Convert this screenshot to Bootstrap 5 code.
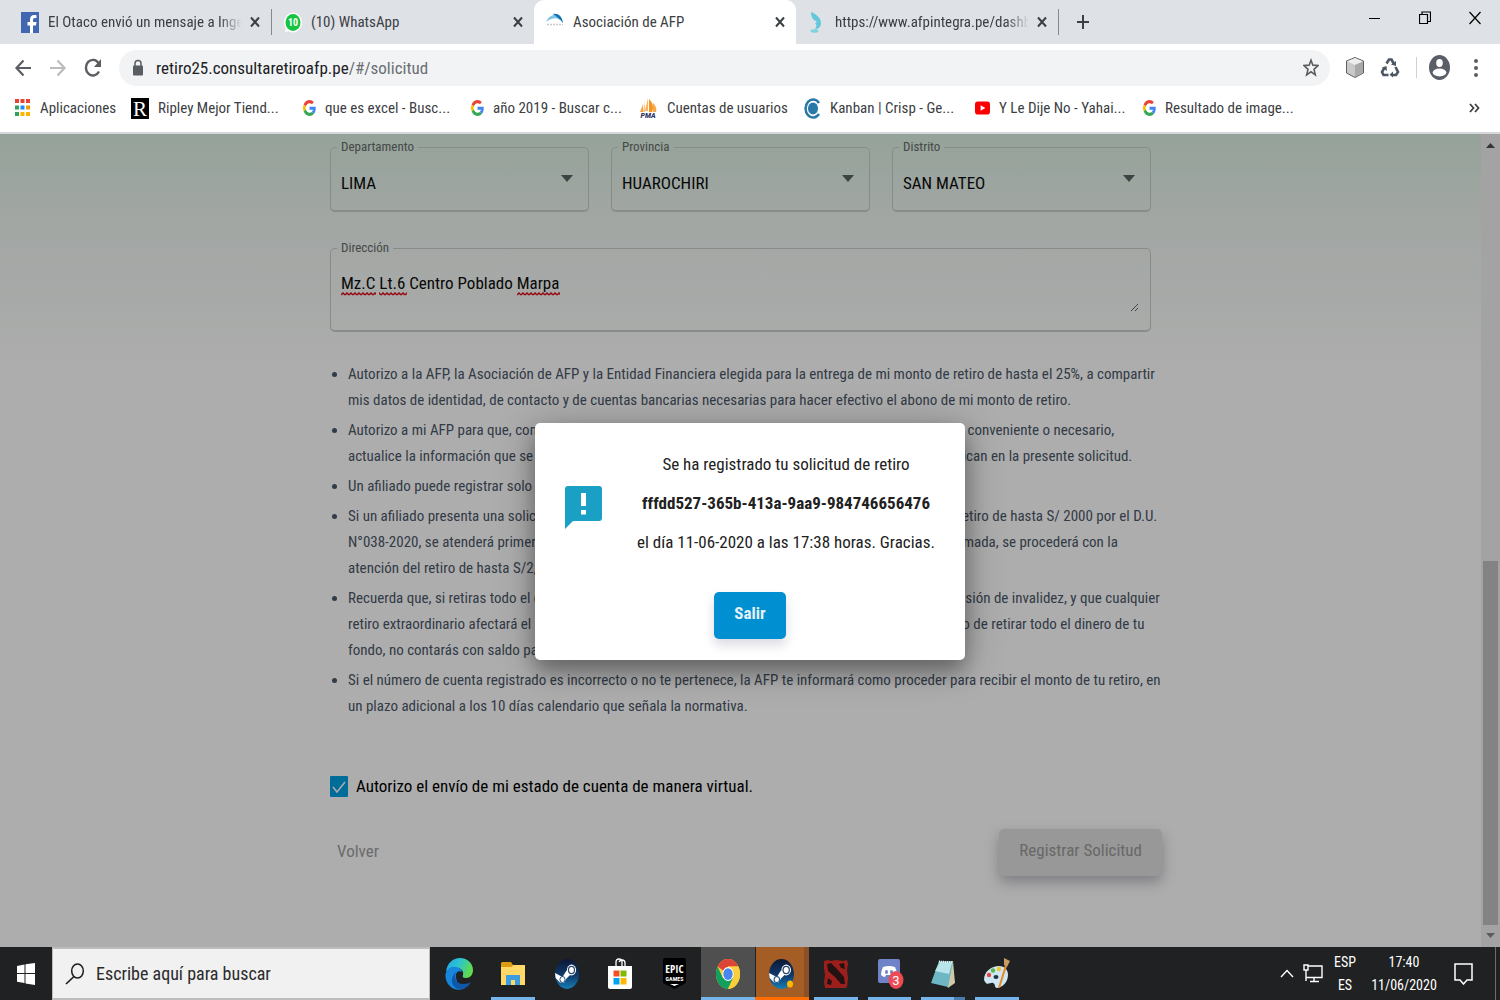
<!DOCTYPE html>
<html lang="es">
<head>
<meta charset="utf-8">
<meta name="viewport" content="width=device-width, initial-scale=1">
<title>Asociación de AFP</title>
<link href="https://cdn.jsdelivr.net/npm/bootstrap@5.3.0/dist/css/bootstrap.min.css" rel="stylesheet">
<script src="https://cdn.jsdelivr.net/npm/bootstrap@5.3.0/dist/js/bootstrap.bundle.min.js"></script>
<style>
:root{--page-font:"Roboto Condensed",Roboto,sans-serif}
body{font-family:var(--page-font);font-size:17px;overflow:hidden}
button{font-family:inherit}
svg{display:block;flex:none}
.plain{background:none;border:0;padding:0;color:inherit}
/* browser window */
.browser{font-size:15px;color:#3c4043;line-height:20px}
.tabstrip{background:#dee1e6;height:44px;padding-left:9px}
.tab{width:262px;padding:0 10px 0 12px;position:relative}
.tab .ttl{flex:1;overflow:hidden;white-space:nowrap;margin-left:9px;margin-right:7px}
.tab .fade-end{-webkit-mask-image:linear-gradient(90deg,#000 88%,transparent)}
.tab.on{background:#fff;border-radius:10px 10px 0 0}
.split{width:1px;height:26px;background:#85898e}
.wins{width:150px;color:#000}
.toolbar{height:47px;padding:0 14px}
.nav-ico{width:35px}
.omni{background:#f1f3f4;border-radius:18px;height:36px;padding:0 11px 0 13px}
.addr{font-size:17px;margin-left:12px;color:#6a6e73}
.addr .host{color:#202124}
.rule-v{width:1px;height:21px;background:#cfd1d4}
.dots{margin-left:24px}
.marks{height:43px;padding:0 20px 7px 15px;border-bottom:2px solid #d5d8da}
.marks a{color:#3c4043;text-decoration:none;white-space:nowrap;width:168px;flex:none}
.marks a.apps{width:116px}
.marks a svg{margin-right:9px}
/* page */
.pane{background:#fff}
.sheet{background:linear-gradient(180deg,#dcf0e3 0,#eef5f0 80px,#fff 240px);padding-top:5px}
.col-form{max-width:821px}
.box{border:1px solid #c9cfcb;border-bottom-width:2px;border-radius:5px;padding:0 11px 0 6px;margin:0;min-width:0}
.box legend{float:none;width:auto;font-size:13px;line-height:16px;margin:0;padding:0 4px;color:#666c69}
.box select,.box textarea{border:0;background:none;padding:0 0 0 4px;outline:0;color:#0c0c0c;appearance:none;width:100%}
.box select{height:56px;margin-top:-1px;padding-top:3px}
.box textarea{height:56px;padding-top:15px;resize:vertical;display:block;line-height:24px;margin-bottom:18px}
.gap-fields{gap:22px}
.addr-box{margin-top:28px}
.spell{position:absolute;left:4px;top:36px}
.terms{font-size:15px;line-height:26px;color:#4b5768;padding-left:18px;margin:29px -12px 0 0;white-space:nowrap}
.terms li{margin-bottom:4px}
.consent{margin-top:55px}
.form-check-input[type=checkbox].tick{width:18px;height:21px;margin:0;border-radius:1px;border:0}
.form-check-input[type=checkbox].tick:checked{background-color:#009fe3;background-size:100% 100%;background-image:url("data:image/svg+xml,%3Csvg xmlns='http://www.w3.org/2000/svg' viewBox='0 0 18 21'%3E%3Cpath d='M3 11l4 5 8-10' fill='none' stroke='%23fff' stroke-width='1.500'/%3E%3C/svg%3E")}
.actions{margin:29px -11px 0 0}
.act{height:47px;padding:0 20px 3px;border-radius:5px;border:0}
.act-off{background:#e0e0e0;color:#9a9a9a;box-shadow:0 6px 14px rgba(60,60,80,.35)}
.back{color:#a0a0a0;text-decoration:none;padding-left:7px;line-height:44px}
.back:hover{color:#888}
.sbar{width:19px;background:#f1f1f1}
.thumb{background:#c1c1c1;width:15px;height:364px;margin-bottom:7px}
.shade{position:absolute;inset:0;background:rgba(0,0,0,.32)}
.dlg{width:430px;background:#fff;border-radius:5px;padding:22px 30px 21px;box-shadow:0 12px 20px rgba(0,0,0,.3),0 4px 40px rgba(0,0,0,.25);color:#212121;margin-top:2px}
.dlg p{line-height:39px;margin:0;white-space:nowrap}
.dlg p.code{font-weight:700}
.act-go{background:#008fd0;color:#e4f1f8;font-weight:700;box-shadow:0 6px 12px rgba(0,0,60,.15);margin-top:30px}
/* desktop bar */
.desk{background:#1f2122;height:53px;color:#fff}
.start{width:52px}
.seek{width:378px;background:#f1f1f1;border:2px solid #bdbdbd;border-width:2px 1px;padding-left:12px}
.seek input{border:0;background:none;outline:0;font-size:18px;padding:0;margin-left:11px;color:#2b2b2b}
.seek input::placeholder{color:#2b2b2b;opacity:1}
.apps-run{width:592px;margin-left:2px}
.app{flex:1 1 0;position:relative}
.app.open::after{content:"";position:absolute;left:5px;right:5px;bottom:0;height:3px;background:#76b4ec}
.app.front{background:#4f4f4f}
.app.front::after,.app.alert-on::after{left:0;right:0}
.app.alert-on{background:#a55d26;box-shadow:inset -5px 0 #8a5128,inset 1px 0 #1f2122}
.app.alert-on::after{background:#ff6c00}
.app.multi::after{background:linear-gradient(90deg,#76b4ec 76%,#4a7dab 76%)}
.tray{font-size:14px;line-height:23px;text-align:center}
.lang{width:44px}
.clock{width:74px}
.net{margin-left:9px}
.notes{margin:0 22px 0 13px}
.peek{width:1px;background:#6e6e6e}
</style>
</head>
<body>
<svg width="0" height="0" class="position-absolute" aria-hidden="true">
<defs>
<linearGradient id="stg" x1="0" y1="0" x2="0" y2="1"><stop offset="0" stop-color="#0d1836"/><stop offset=".55" stop-color="#0f3a6c"/><stop offset="1" stop-color="#1480b8"/></linearGradient>
<linearGradient id="edA" x1="0" y1="0" x2="1" y2=".4"><stop offset="0" stop-color="#1fa4e6"/><stop offset=".5" stop-color="#2bc3d2"/><stop offset="1" stop-color="#5fdc4e"/></linearGradient>
<symbol id="x" viewBox="0 0 12 14"><path d="M2 2.500l8 9M10 2.500l-8 9" stroke="#3c4043" stroke-width="2" fill="none"/></symbol>
<symbol id="g" viewBox="0 0 48 48" preserveAspectRatio="none"><path fill="#ea4335" d="M24 9.500c3.500 0 6.700 1.200 9.200 3.600l6.900-6.900C35.900 2.400 30.500 0 24 0 14.600 0 6.500 5.400 2.600 13.200l8 6.200C12.400 13.700 17.700 9.500 24 9.500z"/><path fill="#4285f4" d="M47 24.600c0-1.600-.2-3.100-.4-4.600H24v9h12.900c-.6 3-2.300 5.500-4.800 7.200l7.700 6C44.400 38 47 31.800 47 24.600z"/><path fill="#fbbc05" d="M10.500 28.600c-.5-1.500-.8-3-.8-4.600s.3-3.100.8-4.600l-8-6.200C.9 16.500 0 20.100 0 24s.9 7.500 2.600 10.800z"/><path fill="#34a853" d="M24 48c6.500 0 11.900-2.100 15.900-5.800l-7.700-6c-2.200 1.500-4.900 2.300-8.200 2.300-6.300 0-11.600-4.200-13.500-9.900l-8 6.200C6.500 42.600 14.600 48 24 48z"/></symbol>
<symbol id="steam" viewBox="0 0 24 30" preserveAspectRatio="none"><ellipse cx="12" cy="15" rx="12" ry="15" fill="url(#stg)"/><path d="M0 14l7.500 4 4-6.500L16 15l-4.500 4.500L9 24l-4-.5L.6 19z" fill="#fff"/><ellipse cx="16.500" cy="11" rx="4.600" ry="5.400" fill="#fff"/><ellipse cx="16.500" cy="11" rx="3" ry="3.600" fill="none" stroke="#2a4668" stroke-width="1.200"/><ellipse cx="7.500" cy="20.500" rx="2.600" ry="3" fill="none" stroke="#24507c" stroke-width="1"/></symbol>
</defs>
</svg>
<div class="d-flex flex-column vh-100">
<header class="browser bg-white">
  <div class="tabstrip d-flex align-items-stretch">
    <div class="tab d-flex align-items-center">
      <svg width="18" height="21" viewBox="0 0 18 21"><rect width="18" height="21" fill="#4267b2"/><path d="M12 21v-7.500h3l.5-3.500H12V8c0-1.300.5-2 2-2h1.500V3.200C15 3.100 14.200 3 13.200 3 10.600 3 9 4.600 9 7.500V10H6.500v3.500H9V21z" fill="#fff"/></svg>
      <span class="ttl fade-end">El Otaco envió un mensaje a Inge</span>
      <button class="plain" aria-label="Cerrar"><svg width="12" height="14"><use href="#x"/></svg></button>
    </div>
    <span class="split align-self-center"></span>
    <div class="tab d-flex align-items-center">
      <svg width="18" height="21" viewBox="0 0 18 21"><ellipse cx="9" cy="10.500" rx="9" ry="10" fill="#fff"/><path d="M1 20l1-5 4 4z" fill="#fff"/><ellipse cx="9" cy="10.500" rx="7.500" ry="8.500" fill="#15c540"/><text x="9" y="14" font-family="Roboto Condensed, sans-serif" font-weight="700" font-size="10" text-anchor="middle" fill="#fff">10</text></svg>
      <span class="ttl">(10) WhatsApp</span>
      <button class="plain" aria-label="Cerrar"><svg width="12" height="14"><use href="#x"/></svg></button>
    </div>
    <div class="tab on d-flex align-items-center">
      <svg width="18" height="21" viewBox="0 0 18 21"><path d="M0 10C3 3 12-1 16 8l1 3c-4-6-10-6-17-1z" fill="#7cc4e4"/><path d="M7 2c5-1 9 2 10 9-3-4-6-6-10-9z" fill="#1472b0"/><path d="M1 12.500h16" stroke="#c3cbd1" stroke-width="1.500" stroke-dasharray="2 1"/></svg>
      <span class="ttl">Asociación de AFP</span>
      <button class="plain" aria-label="Cerrar"><svg width="12" height="14"><use href="#x"/></svg></button>
    </div>
    <div class="tab d-flex align-items-center">
      <svg width="18" height="21" viewBox="0 0 18 21"><path d="M3 0c5 2 10 6 10 11 0 4-3 6-7 7 3-3 3-5 1-7 2 0 2-1 1-2C5 8 3 5 3 0z" fill="#62c8da"/><ellipse cx="6.500" cy="19" rx="4" ry="1.800" fill="#7ed3e1"/></svg>
      <span class="ttl fade-end">https://www.afpintegra.pe/dashb</span>
      <button class="plain" aria-label="Cerrar"><svg width="12" height="14"><use href="#x"/></svg></button>
    </div>
    <span class="split align-self-center"></span>
    <button class="plain ms-3" aria-label="Nueva pestaña"><svg width="16" height="16" viewBox="0 0 16 16"><path d="M8 1v14M2 8h12" stroke="#3c4043" stroke-width="2"/></svg></button>
    <div class="wins ms-auto d-flex justify-content-around align-items-center pb-2">
      <button class="plain" aria-label="Minimizar"><svg width="12" height="12" viewBox="0 0 12 12"><path d="M0 6.500h11" stroke="#000"/></svg></button>
      <button class="plain" aria-label="Restaurar"><svg width="12" height="14" viewBox="0 0 12 14"><path d="M.5 3.500h8v9h-8zM3 3V1h8.500v9.500H9" fill="none" stroke="#000" stroke-width="1.200"/></svg></button>
      <button class="plain" aria-label="Cerrar ventana"><svg width="12" height="14" viewBox="0 0 12 14"><path d="M.5 1l11 12M11.500 1l-11 12" stroke="#000" stroke-width="1.200"/></svg></button>
    </div>
  </div>
  <div class="toolbar d-flex align-items-center">
    <button class="plain nav-ico" aria-label="Atrás"><svg width="18" height="20" viewBox="0 0 18 20"><path d="M17 10H3M9.500 2.500L2.500 10l7 7.500" fill="none" stroke="#5a5e63" stroke-width="2.200"/></svg></button>
    <button class="plain nav-ico" aria-label="Adelante"><svg width="18" height="20" viewBox="0 0 18 20"><path d="M1 10h14M8.500 2.500l7 7.500-7 7.500" fill="none" stroke="#babcbe" stroke-width="2.200"/></svg></button>
    <button class="plain nav-ico" aria-label="Recargar"><svg width="18" height="20" viewBox="0 0 18 20"><path d="M15 13.500A7 7.800 0 1 1 14.500 5" fill="none" stroke="#5a5e63" stroke-width="2.400"/><path d="M17 1v8h-7z" fill="#5a5e63"/></svg></button>
    <div class="omni d-flex align-items-center flex-grow-1">
      <svg width="12" height="18" viewBox="0 0 12 18"><rect x="1" y="6.500" width="10" height="10" rx="1" fill="#5a5e63"/><path d="M3 7V4.500a3 3 0 0 1 6 0V7" fill="none" stroke="#5a5e63" stroke-width="1.500"/></svg>
      <div class="addr flex-grow-1"><span class="host">retiro25.consultaretiroafp.pe</span>/#/solicitud</div>
      <svg width="16" height="19" viewBox="0 0 24 28"><path d="M12 3l2.800 7.500 7.700.5-6 5.800 2 8.200-6.500-4.500L5.500 25l2-8.200-6-5.800 7.700-.5z" fill="none" stroke="#5a5e63" stroke-width="2.400"/></svg>
    </div>
    <svg class="ms-3" width="18" height="21" viewBox="0 0 18 21"><path d="M9 .5L17.500 4v12L9 20.500.5 16V4z" fill="#c9c9c9" stroke="#5e5e5e"/><path d="M1 4.500L9 8l8-3.500L9 1z" fill="#ededed"/><path d="M9 8v12l8-4V4.500z" fill="#a9a9a9"/></svg>
    <svg class="ms-3" width="20" height="21" viewBox="0 0 20 21"><g fill="none" stroke="#4c5763" stroke-width="2.600"><path d="M6.500 6.500L9 2.500h2.500l2.500 4.500"/><path d="M15.500 10l2.500 5-2 3h-4"/><path d="M8.500 18h-5L2 15l2.500-4.500"/></g><path d="M11 7.500l5 1.500 0-5zM13 14.500v6l-3.500-2.700zM2 10.500l4.500-1.500L7 14z" fill="#4c5763"/></svg>
    <span class="rule-v ms-3 me-2"></span>
    <svg class="ms-1" width="21" height="25" viewBox="0 0 21 25"><ellipse cx="10.500" cy="12.500" rx="10.500" ry="12.500" fill="#5a5e66"/><ellipse cx="10.500" cy="8" rx="3.300" ry="4" fill="#fff"/><ellipse cx="10.500" cy="17.500" rx="6.800" ry="3.900" fill="#fff"/></svg>
    <svg class="dots me-2" width="4" height="18" viewBox="0 0 4 18"><g fill="#5a5e63"><circle cx="2" cy="2" r="2"/><circle cx="2" cy="9" r="2"/><circle cx="2" cy="16" r="2"/></g></svg>
  </div>
  <nav class="marks d-flex align-items-center" aria-label="Marcadores">
    <a class="apps d-flex align-items-center" href="#"><svg width="16" height="18" viewBox="0 0 16 18" preserveAspectRatio="none"><path fill="#ea4335" d="M0 0h4v4H0zM5.500 0h4v4h-4zM11 0h4v4h-4z"/><path fill="#34a05c" d="M0 6.500h4v4H0z"/><path fill="#1a8cf5" d="M5.500 6.500h4v4h-4z"/><path fill="#f29900" d="M11 6.500h4v4h-4z"/><path fill="#34a05c" d="M0 13h4v4H0z"/><path fill="#fbb400" d="M5.500 13h4v4h-4zM11 13h4v4h-4z"/></svg>Aplicaciones</a>
    <a class="d-flex align-items-center" href="#"><svg width="18" height="21" viewBox="0 0 18 21"><rect width="18" height="21" fill="#000"/><text x="9" y="18" font-family="Liberation Serif, serif" font-size="21" text-anchor="middle" fill="#fff">R</text></svg>Ripley Mejor Tiend...</a>
    <a class="d-flex align-items-center" href="#"><svg class="ms-1" width="13" height="16" viewBox="0 0 13 16"><use href="#g" width="13" height="16"/></svg>que es excel - Busc...</a>
    <a class="d-flex align-items-center" href="#"><svg class="ms-1" width="13" height="16" viewBox="0 0 13 16"><use href="#g" width="13" height="16"/></svg>año 2019 - Buscar c...</a>
    <a class="d-flex align-items-center" href="#"><svg class="ms-1" width="19" height="21" viewBox="0 0 19 21"><path d="M9 0v13H6z" fill="#fdb15a"/><path d="M4 6v8H1z" fill="#f9a03c"/><path d="M6 3v11H4z" fill="#fbc27f"/><path d="M10 1c4 4 5 8 3 13h-3z" fill="#f7931e"/><path d="M14 5c3 3 4 6 3 9h-3z" fill="#f6a94d"/><text x="9" y="20" font-family="Roboto, sans-serif" font-size="7" font-weight="900" font-style="italic" text-anchor="middle" fill="#333366">PMA</text></svg>Cuentas de usuarios</a>
    <a class="d-flex align-items-center" href="#"><svg width="18" height="21" viewBox="0 0 18 21"><path d="M16 5A7.500 9 0 1 0 16 16" fill="none" stroke="#2878a8" stroke-width="2.500"/><ellipse cx="10" cy="10.500" rx="5" ry="6" fill="#2878a8"/></svg>Kanban | Crisp - Ge...</a>
    <a class="d-flex align-items-center" href="#"><svg class="ms-1" width="15" height="16" viewBox="0 0 16 16"><rect y="1" width="16" height="14" rx="3" fill="#f00"/><path d="M6 5l5 3-5 3z" fill="#fff"/></svg>Y Le Dije No - Yahai...</a>
    <a class="d-flex align-items-center" href="#"><svg class="ms-1" width="13" height="16" viewBox="0 0 13 16"><use href="#g" width="13" height="16"/></svg>Resultado de image...</a>
    <button class="plain ms-auto" aria-label="Más marcadores"><svg width="11" height="10" viewBox="0 0 11 10"><path d="M1 1l3.500 4L1 9M6 1l3.500 4L6 9" fill="none" stroke="#3c4043" stroke-width="1.800"/></svg></button>
  </nav>
</header>

<main class="pane flex-grow-1 position-relative d-flex overflow-hidden">
  <div class="sheet flex-grow-1">
    <form class="col-form mx-auto">
      <div class="d-flex gap-fields">
        <fieldset class="box flex-fill w-100"><legend><label for="dep">Departamento</label></legend>
          <div class="d-flex align-items-center"><select id="dep"><option>LIMA</option></select><svg class="mb-2" width="20" height="7" viewBox="0 0 20 7"><path d="M4 0h12l-6 7z" fill="#5d6460"/></svg></div></fieldset>
        <fieldset class="box flex-fill w-100"><legend><label for="prov">Provincia</label></legend>
          <div class="d-flex align-items-center"><select id="prov"><option>HUAROCHIRI</option></select><svg class="mb-2" width="20" height="7" viewBox="0 0 20 7"><path d="M4 0h12l-6 7z" fill="#5d6460"/></svg></div></fieldset>
        <fieldset class="box flex-fill w-100"><legend><label for="dist">Distrito</label></legend>
          <div class="d-flex align-items-center"><select id="dist"><option>SAN MATEO</option></select><svg class="mb-2" width="20" height="7" viewBox="0 0 20 7"><path d="M4 0h12l-6 7z" fill="#5d6460"/></svg></div></fieldset>
      </div>
      <fieldset class="box addr-box"><legend><label for="dir">Dirección</label></legend>
        <div class="position-relative"><textarea id="dir" spellcheck="false">Mz.C Lt.6 Centro Poblado Marpa</textarea>
        <svg class="spell" width="224" height="4" viewBox="0 0 224 4" aria-hidden="true"><defs><pattern id="zig" width="4" height="4" patternUnits="userSpaceOnUse"><path d="M0 3l2-2 2 2" fill="none" stroke="#e00d1c" stroke-width="1.500"/></pattern></defs><path d="M0 0h35v4H0zM38 0h28v4H38zM176 0h43v4h-43z" fill="url(#zig)"/></svg></div></fieldset>
      <ul class="terms">
        <li>Autorizo a la AFP, la Asociación de AFP y la Entidad Financiera elegida para la entrega de mi monto de retiro de hasta el 25%, a compartir<br>mis datos de identidad, de contacto y de cuentas bancarias necesarias para hacer efectivo el abono de mi monto de retiro.</li>
        <li>Autorizo a mi AFP para que, con la información que registro en esta solicitud, y en caso que lo considere conveniente o necesario,<br>actualice la información que se encuentra en sus registros, conforme a los datos de contacto que se indican en la presente solicitud.</li>
        <li>Un afiliado puede registrar solo una solicitud de retiro.</li>
        <li>Si un afiliado presenta una solicitud de retiro de hasta el 25%, y también ya cuenta con una solicitud de retiro de hasta S/ 2000 por el D.U.<br>N°038-2020, se atenderá primero la solicitud de retiro de hasta el 25% y, luego de que esta ya esté confirmada, se procederá con la<br>atención del retiro de hasta S/2,000.</li>
        <li>Recuerda que, si retiras todo el dinero de tu fondo, no tendrás seguro de sobrevivencia ni menos una pensión de invalidez, y que cualquier<br>retiro extraordinario afectará el monto de la pensión que recibirás al momento de tu jubilación. En el caso de retirar todo el dinero de tu<br>fondo, no contarás con saldo para una pensión.</li>
        <li>Si el número de cuenta registrado es incorrecto o no te pertenece, la AFP te informará como proceder para recibir el monto de tu retiro, en<br>un plazo adicional a los 10 días calendario que señala la normativa.</li>
      </ul>
      <div class="consent d-flex align-items-center gap-2"><input class="form-check-input tick" type="checkbox" id="envio" checked><label for="envio" class="text-black">Autorizo el envío de mi estado de cuenta de manera virtual.</label></div>
      <div class="actions d-flex justify-content-between align-items-start"><a class="back" href="#">Volver</a><button type="button" class="act act-off">Registrar Solicitud</button></div>
    </form>
  </div>
  <div class="sbar d-flex flex-column align-items-center justify-content-between" aria-hidden="true">
    <svg class="mt-2" width="9" height="7" viewBox="0 0 9 7"><path d="M0 6l4.500-5L9 6z" fill="#505050"/></svg>
    <div class="d-flex flex-column align-items-center"><div class="thumb"></div><svg class="mb-2" width="9" height="7" viewBox="0 0 9 7"><path d="M0 1l4.500 5L9 1z" fill="#888"/></svg></div>
  </div>
  <div class="shade d-flex align-items-center justify-content-center">
    <div class="dlg" role="dialog" aria-modal="true" aria-label="Solicitud registrada">
      <div class="d-flex align-items-center justify-content-between">
        <svg width="37" height="43" viewBox="0 0 37 43" class="mt-2"><path d="M3 0h31q3 0 3 3v29q0 3-3 3H8l-8 8V3q0-3 3-3z" fill="#1aa0c4"/><path d="M16 7h5v13h-5zM16 24h5v4.500h-5z" fill="#fff"/></svg>
        <div class="text-center"><p>Se ha registrado tu solicitud de retiro</p><p class="code">fffdd527-365b-413a-9aa9-984746656476</p><p>el día 11-06-2020 a las 17:38 horas. Gracias.</p></div>
      </div>
      <div class="text-center"><button type="button" class="act act-go">Salir</button></div>
    </div>
  </div>
</main>

<footer class="desk d-flex align-items-stretch">
  <button class="plain start d-flex align-items-center justify-content-center" aria-label="Inicio"><svg width="18" height="22" viewBox="0 0 18 22"><path d="M0 3l7.500-1.500V10H0zM8.500 1.300L18 0v10H8.500zM0 11h7.500v9L0 18.800zM8.500 11H18v11l-9.500-1.500z" fill="#fff"/></svg></button>
  <label class="seek d-flex align-items-center"><svg width="20" height="22" viewBox="0 0 20 22"><ellipse cx="12.500" cy="8" rx="5.800" ry="7" fill="none" stroke="#1e1e1e" stroke-width="1.500"/><path d="M9 13.500L1 21" stroke="#1e1e1e" stroke-width="1.700"/></svg><input type="text" aria-label="Buscar" placeholder="Escribe aquí para buscar"></label>
  <div class="apps-run d-flex">
    <button class="plain app d-flex align-items-center justify-content-center" aria-label="Edge"><svg width="28" height="32" viewBox="0 0 28 32"><path d="M1 14C2 5 8 0 15 0c8 0 13 6 13 12 0 5-3 8-7 8-3 0-4-1-3-3 1-4-2-7-6-7-5 0-9 1-11 4z" fill="url(#edA)"/><path d="M.5 17C1 11 6 8 11 9c3 0 6 3 6 5-4-2-7 1-6 6 1 6 5 9 9 10-9 5-20-2-19.500-13z" fill="#1786dc"/><path d="M11 14c-3 6 1 12 7 12 4 0 6-1 8-2-3 6-9 8-13 7-6-2-9-10-2-17z" fill="#0f58a8"/></svg></button>
    <button class="plain app open d-flex align-items-center justify-content-center" aria-label="Explorador"><svg width="24" height="24" viewBox="0 0 24 24"><path d="M1 0h9l2 3h11v8H0V1z" fill="#dd9b12"/><path d="M0 5l11 0 1-2h12v20H0z" fill="#ffd867"/><path d="M5 23v-10h14v10h-5v-5h-4v5z" fill="#3d9be0"/></svg></button>
    <button class="plain app d-flex align-items-center justify-content-center" aria-label="Steam"><svg width="24" height="30"><use href="#steam" width="24" height="30"/></svg></button>
    <button class="plain app d-flex align-items-center justify-content-center" aria-label="Tienda"><svg width="24" height="31" viewBox="0 0 24 31"><path d="M8 9V4q0-3 3-3t3 3v5M11 4q1-2 3-2 3 0 3 3v4" fill="none" stroke="#fff" stroke-width="1.300"/><path d="M0 8h24v21q0 2-2 2H2q-2 0-2-2z" fill="#fff"/><path d="M5.500 12.500h6v6h-6z" fill="#f25022"/><path d="M12.500 12.500h6v6h-6z" fill="#7fba00"/><path d="M5.500 20h6v6.500h-6z" fill="#00a4ef"/><path d="M12.500 20h6v6.500h-6z" fill="#ffb900"/></svg></button>
    <button class="plain app d-flex align-items-center justify-content-center" aria-label="Epic Games"><svg width="23" height="31" viewBox="0 0 23 31"><path d="M2 0h19q2 0 2 2v23l-11.500 6L0 25V2q0-2 2-2z" fill="#000"/><text x="11.500" y="15" font-family="Open Sans Condensed, Roboto Condensed, sans-serif" font-weight="700" font-size="11" text-anchor="middle" fill="#fff">EPIC</text><text x="11.500" y="23" font-family="Roboto Condensed, sans-serif" font-weight="700" font-size="6" text-anchor="middle" fill="#fff">GAMES</text><path d="M7 26h9l-4.500 2z" fill="#fff"/></svg></button>
    <button class="plain app open front d-flex align-items-center justify-content-center" aria-label="Chrome"><svg width="24" height="30" viewBox="0 0 24 24" preserveAspectRatio="none"><circle cx="12" cy="12" r="12" fill="#fbce3c"/><path d="M12 12L1.600 6A12 12 0 0 1 22.400 6H12z" fill="#db4437"/><path d="M1.600 6A12 12 0 0 0 12 24l5.200-9H12L6.800 15z" fill="#12a05c"/><path d="M22.400 6H12l5.200 9L12 24A12 12 0 0 0 22.400 6z" fill="#fbce3c"/><circle cx="12" cy="12" r="5.600" fill="#fff"/><circle cx="12" cy="12" r="4.700" fill="#4a86f0"/></svg></button>
    <button class="plain app open alert-on d-flex align-items-center justify-content-center" aria-label="Steam, aviso"><svg width="25" height="30"><use href="#steam" width="25" height="30"/><ellipse cx="21" cy="25" rx="3" ry="3.500" fill="#fdb900"/></svg></button>
    <button class="plain app open d-flex align-items-center justify-content-center" aria-label="Dota 2"><svg width="24" height="28" viewBox="0 0 24 28"><path d="M0 1l4-1 3 1 5-1 7 1 4-1 1 4-1 6 1 8-1 9-3 2-6-1-7 1-6-1-1-6 1-7-1-7z" fill="#9c1f1b"/><path d="M3 4l4-1 6 6 7 8 1 7-4 0-6-7-7-6zM15 4l5-1 1 6-4-1zM4 18l4 3-1 4-4-1z" fill="#241213"/></svg></button>
    <button class="plain app open d-flex align-items-center justify-content-center" aria-label="Discord"><svg class="ms-1" width="26" height="31" viewBox="0 0 26 31"><path d="M2 1h18q2 0 2 2v25l-5-3H2q-2 0-2-2V3q0-2 2-2z" fill="#7082c8"/><path d="M5 9q6-2 12 0 2 4 2 8-2 2-4 2l-1-2H8l-1 2q-2 0-4-2 0-4 2-8z" fill="#fff"/><ellipse cx="8.500" cy="14" rx="1.500" ry="2" fill="#7082c8"/><ellipse cx="13.500" cy="14" rx="1.500" ry="2" fill="#7082c8"/><ellipse cx="18" cy="22" rx="7.500" ry="9" fill="#ec4b55"/><text x="18" y="27" font-family="Roboto, sans-serif" font-size="13" text-anchor="middle" fill="#fff">3</text></svg></button>
    <button class="plain app open multi d-flex align-items-center justify-content-center" aria-label="Bloc de notas"><svg width="24" height="28" viewBox="0 0 24 28"><path d="M8 2l14-1 2 22-7 5z" fill="#cfc9a8"/><path d="M8 1l14 1-5 25-17-4z" fill="#6db8c4"/><path d="M9 2l12 1-3 11-14-3z" fill="#b9e4ea"/><path d="M8 1.500l14 1" stroke="#e8f4f6" stroke-width="2" stroke-dasharray="1 1"/></svg></button>
    <button class="plain app open d-flex align-items-center justify-content-center" aria-label="Paint"><svg width="27" height="31" viewBox="0 0 27 31"><path d="M0 22C0 13 8 8 15 8c6 0 9 4 9 9 0 8-7 13-11 13-3 0-1-4-4-5s-6 4-9-3z" fill="#cfe6f4"/><circle cx="5" cy="17" r="2.200" fill="#e2483b"/><circle cx="9" cy="12.500" r="2.200" fill="#57b947"/><circle cx="15" cy="11" r="2.200" fill="#f6c12d"/><ellipse cx="12" cy="19" rx="2.500" ry="2" fill="#23343f"/><path d="M21 7l2 1-7 22-2 0z" fill="#e58a2a"/><path d="M20 0l6 3-3 6-3-2z" fill="#c99a62"/></svg></button>
  </div>
  <div class="tray d-flex align-items-center ms-auto">
    <svg width="14" height="9" viewBox="0 0 14 9"><path d="M1 8l6-6.500L13 8" fill="none" stroke="#fff" stroke-width="1.400"/></svg>
    <svg class="net" width="20" height="19" viewBox="0 0 20 19"><path d="M5 2h14v11.500H3V8M1 1h4v5H1zM3 6v11M11 14v3M7 17.500h9" fill="none" stroke="#fff" stroke-width="1.400"/></svg>
    <div class="lang">ESP<br>ES</div>
    <div class="clock">17:40<br>11/06/2020</div>
    <svg class="notes" width="19" height="22" viewBox="0 0 19 22"><path d="M1 1h17v16h-5l-3.500 4L6 17H1z" fill="none" stroke="#fff" stroke-width="1.500"/></svg>
    <span class="peek align-self-stretch me-1"></span>
  </div>
</footer>
</div>
</body>
</html>
